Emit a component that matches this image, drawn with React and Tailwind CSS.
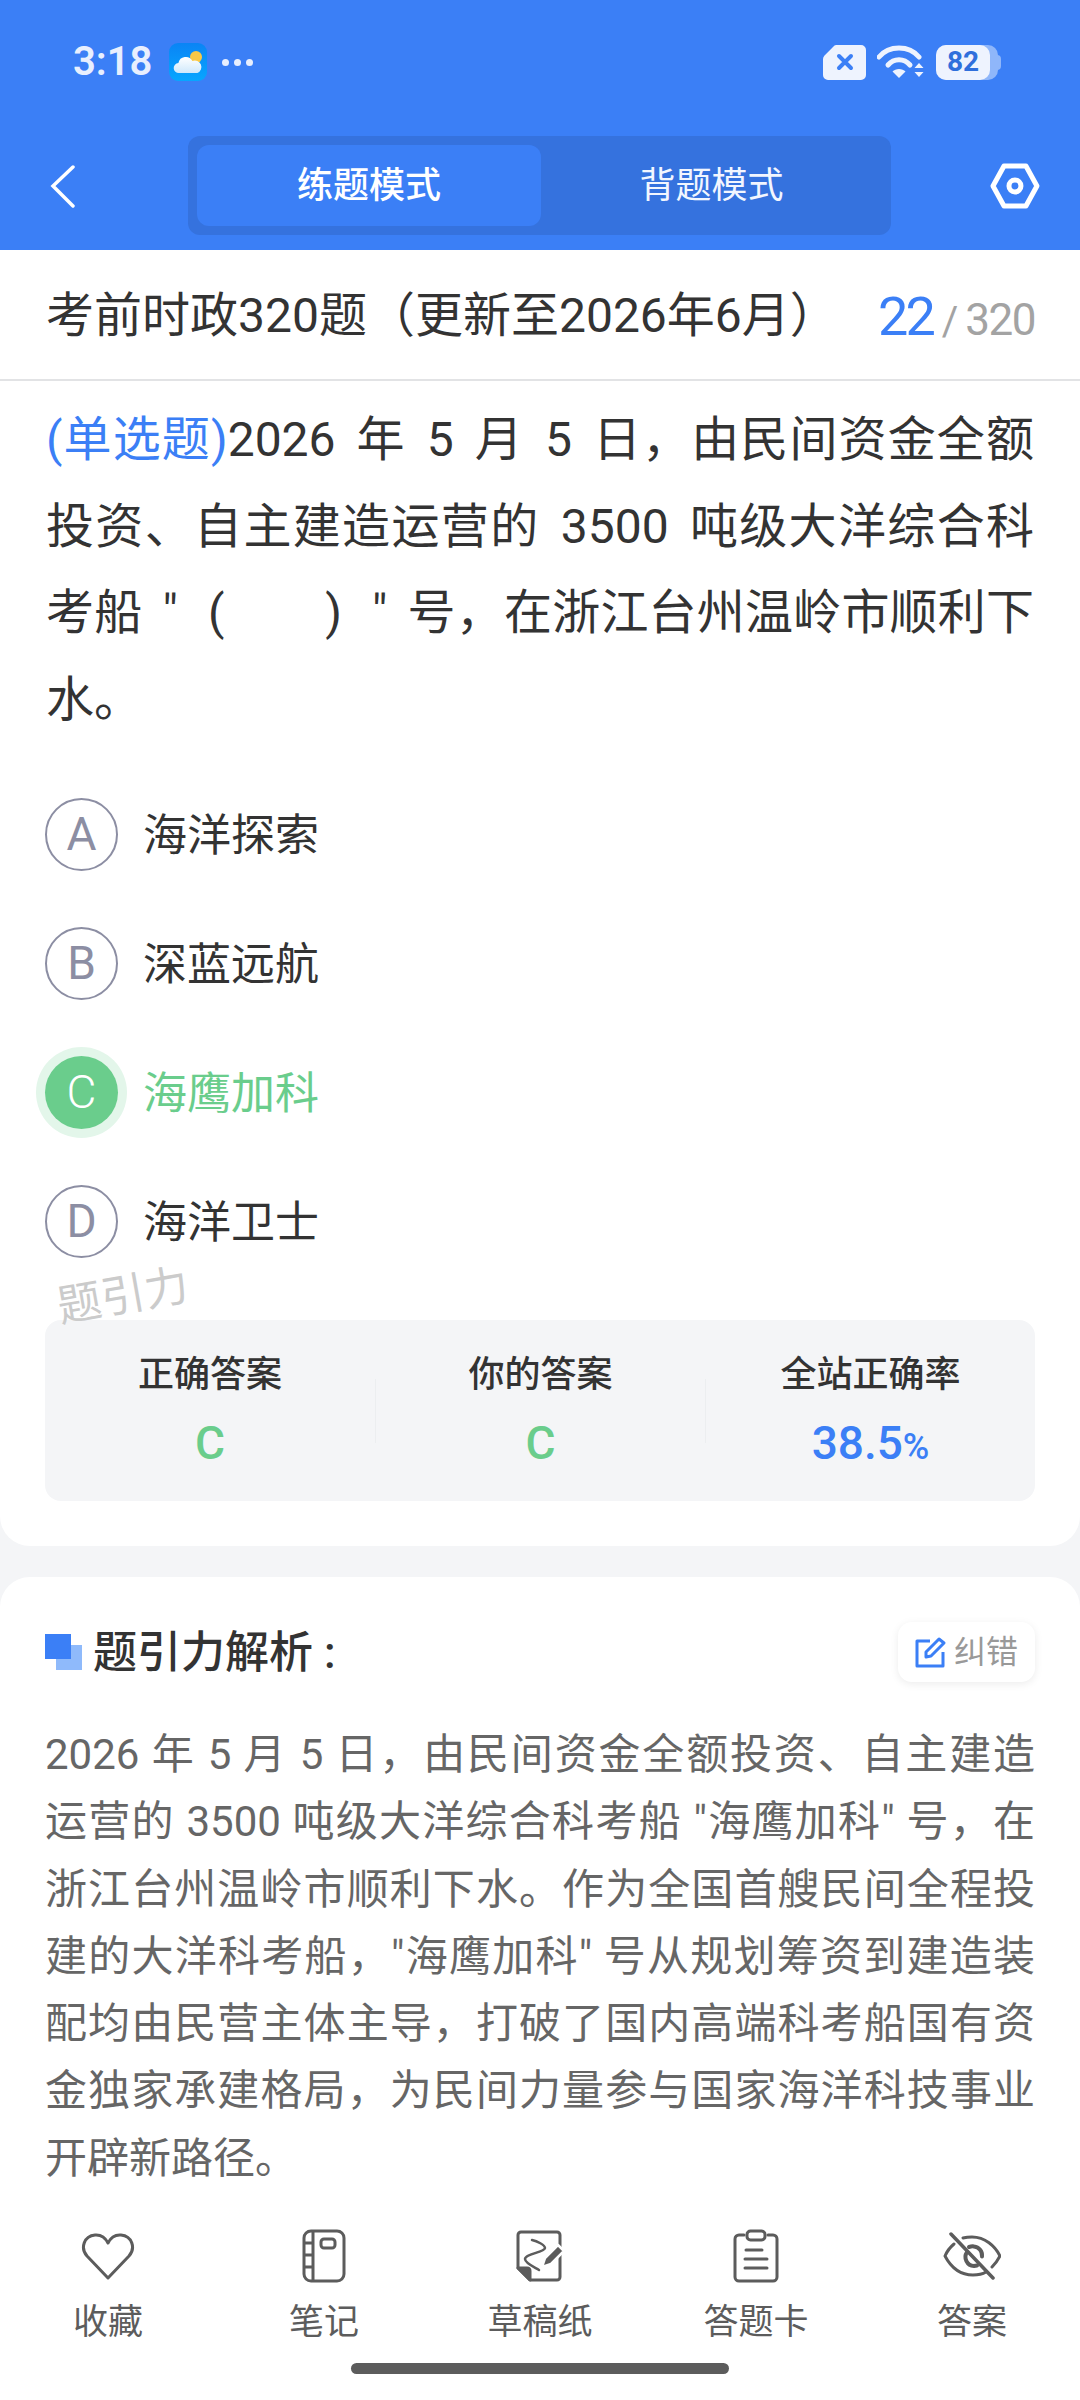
const options = [
  { key: 'A', text: '海洋探索' },
  { key: 'B', text: '深蓝远航' },
  { key: 'C', text: '海鹰加科', correct: true },
  { key: 'D', text: '海洋卫士' },
];

function WeatherIcon() {
  return (
    <svg width="38" height="38" viewBox="0 0 38 38">
      <defs>
        <linearGradient id="sky" x1="0" y1="0" x2="0" y2="1">
          <stop offset="0" stopColor="#0a84f5" />
          <stop offset="1" stopColor="#07a6ff" />
        </linearGradient>
        <linearGradient id="cloud" x1="0" y1="0" x2="0" y2="1">
          <stop offset="0" stopColor="#ffffff" />
          <stop offset="1" stopColor="#cfe8fb" />
        </linearGradient>
      </defs>
      <rect width="38" height="38" rx="9" fill="url(#sky)" />
      <circle cx="27" cy="14" r="6" fill="#f9c846" />
      <path d="M10 30a5 5 0 0 1-.6-10 7.500 7.500 0 0 1 14-2 6 6 0 0 1 5 12z" fill="url(#cloud)" />
    </svg>
  );
}

function SimIcon() {
  return (
    <svg width="43" height="35" viewBox="0 0 43 35">
      <path d="M13 0h25a5 5 0 0 1 5 5v25a5 5 0 0 1-5 5H5a5 5 0 0 1-5-5V14q0-2 1.500-3.500L10 2q1.500-2 3-2z" fill="#eef3fe" />
      <path d="M16 11l12 12M28 11L16 23" stroke="#3b7ff6" strokeWidth="4" strokeLinecap="round" />
    </svg>
  );
}

function WifiIcon() {
  return (
    <svg width="48" height="36" viewBox="0 0 48 36" fill="none">
      <path d="M2 13C12 1 32 1 42 13" stroke="#eef3fe" strokeWidth="5" strokeLinecap="round" />
      <path d="M11 21c6-7 16-7 22 0" stroke="#eef3fe" strokeWidth="5" strokeLinecap="round" />
      <path d="M15.500 27.500c3-3.500 10-3.500 13 0L22 34z" fill="#eef3fe" />
      <path d="M37.500 24l4.500-5 4.500 5zM37.500 28l4.500 5 4.500-5z" fill="#eef3fe" />
    </svg>
  );
}

function BatteryIcon() {
  return (
    <div className="relative flex h-[35px] w-[65px] items-center">
      <div className="absolute left-0 top-0 h-[35px] w-[62px] rounded-[10px] bg-[#8fb6fa]" />
      <div className="absolute right-0 top-[10px] h-[15px] w-[6px] rounded-r-[4px] bg-[#8fb6fa]" />
      <div className="absolute left-0 top-0 flex h-[35px] w-[54px] items-center justify-center rounded-[10px] bg-[#eef3fe] text-[28px] font-bold leading-none text-[#2f6fdc]">
        82
      </div>
    </div>
  );
}

function HeartIcon() {
  return (
    <svg width="54" height="50" viewBox="0 0 54 50" fill="none" stroke="#5c5c5c" strokeWidth="3" strokeLinejoin="round">
      <path d="M27 47L6 25C-1 17 3 5 14 4c6-.5 10 2 13 8 3-6 7-8.500 13-8 11 1 15 13 8 21z" />
    </svg>
  );
}

function NoteIcon() {
  return (
    <svg width="44" height="54" viewBox="0 0 44 54" fill="none" stroke="#5c5c5c" strokeWidth="3">
      <rect x="2" y="2" width="40" height="50" rx="7" />
      <path d="M11 2v50M2 14h9M2 26h9M2 38h9" />
      <rect x="19" y="10" width="14" height="9" rx="3" />
    </svg>
  );
}

function DraftIcon() {
  return (
    <svg width="48" height="52" viewBox="0 0 48 52" fill="none" stroke="#5c5c5c" strokeWidth="3" strokeLinejoin="round">
      <path d="M14 50H41a3 3 0 0 0 3-3V5a3 3 0 0 0-3-3H5a3 3 0 0 0-3 3V38z" />
      <path d="M2 38h9q3 0 3 3v9z" fill="#5c5c5c" />
      <path d="M16 10c5 1 13 5 13 8 0 4-20 6-20 11 0 4 9 8 14 11" strokeWidth="2.500" strokeLinecap="round" />
      <path d="M26 37l3-9 13-13 6 6-13 13z" fill="#5c5c5c" stroke="#fff" strokeWidth="2.500" />
    </svg>
  );
}

function CardIcon() {
  return (
    <svg width="46" height="54" viewBox="0 0 46 54" fill="none" stroke="#5c5c5c" strokeWidth="3" strokeLinecap="round">
      <path d="M11 6H6a4 4 0 0 0-4 4v38a4 4 0 0 0 4 4h34a4 4 0 0 0 4-4V10a4 4 0 0 0-4-4h-5" />
      <rect x="14" y="2" width="18" height="9" rx="3.500" />
      <path d="M13 21h16M12 30h22M12 39h22" />
    </svg>
  );
}

function EyeOffIcon() {
  return (
    <svg width="58" height="48" viewBox="0 0 58 48" fill="none" stroke="#5c5c5c" strokeWidth="3" strokeLinecap="round" strokeLinejoin="round">
      <path d="M11 12Q5 17 2 24q10 19 28 19 8 0 13-3M20 6q4-1 9-1c13 0 23 9 28 19q-3 6-8 11" />
      <path d="M24 20a9 9 0 0 0 7 14l3-.5M26 15q3-1 5-.5a9 9 0 0 1 8 10" strokeWidth="4" />
      <path d="M8 2l42 44" strokeWidth="3.500" />
    </svg>
  );
}

const tools = [
  { label: '收藏', icon: <HeartIcon /> },
  { label: '笔记', icon: <NoteIcon /> },
  { label: '草稿纸', icon: <DraftIcon /> },
  { label: '答题卡', icon: <CardIcon /> },
  { label: '答案', icon: <EyeOffIcon /> },
];

export default function App() {
  return (
    <div className="flex h-[2400px] w-[1080px] flex-col overflow-hidden bg-[#f4f5f7] font-['Roboto','Noto_Sans_CJK_SC',sans-serif]">
      {/* header */}
      <header className="h-[250px] shrink-0 bg-[#3b7ff6] text-white">
        <div className="flex h-[124px] items-center justify-between pl-[73px] pr-[79px]">
          <div className="flex items-center">
            <span className="text-[40px] font-semibold leading-none text-[#e8effe]">3:18</span>
            <span className="ml-[17px] flex"><WeatherIcon /></span>
            <span className="ml-[15px] flex gap-[5px]">
              <i className="h-[7px] w-[7px] rounded-full bg-[#e8effe]" />
              <i className="h-[7px] w-[7px] rounded-full bg-[#e8effe]" />
              <i className="h-[7px] w-[7px] rounded-full bg-[#e8effe]" />
            </span>
          </div>
          <div className="flex items-center gap-[11px]">
            <SimIcon />
            <WifiIcon />
            <BatteryIcon />
          </div>
        </div>
        <div className="flex items-center pl-[49px] pr-[40px] pt-[12px]">
          <svg width="28" height="44" viewBox="0 0 28 44" fill="none" stroke="#fff" strokeWidth="3.500" strokeLinecap="round">
            <path d="M24 3L4 22l20 20" />
          </svg>
          <div className="ml-[111px] flex h-[99px] w-[704px] rounded-[12px] bg-[#3572de] p-[9px]">
            <div className="flex w-[344px] items-center justify-center rounded-[12px] bg-[#3b7ff6] text-[36px] font-medium">练题模式</div>
            <div className="flex flex-1 items-center justify-center text-[36px] text-[#f2f6ff]">背题模式</div>
          </div>
          <svg className="ml-[99px]" width="50" height="46" viewBox="0 0 50 46" fill="none" stroke="#fff" strokeWidth="5" strokeLinejoin="round">
            <path d="M14 3h22l11 20-11 20H14L3 23z" />
            <circle cx="25" cy="23" r="6" />
          </svg>
        </div>
      </header>

      <main className="relative min-h-0 flex-1 overflow-hidden">
        {/* question card */}
        <section className="rounded-b-[30px] bg-white pb-[45px]">
          <div className="flex h-[131px] items-center justify-between border-b-2 border-[#e2e3e5] pl-[46px] pr-[45px] pt-[3px]">
            <h1 className="text-[48px] font-normal text-[#333]">考前时政320题（更新至2026年6月）</h1>
            <div className="flex items-baseline">
              <span className="text-[54px] tracking-[-3px] text-[#3b7ff6]">22</span>
              <span className="ml-[9px] text-[40px] text-[#a3a3a3]">/</span>
              <span className="ml-[7px] text-[44px] tracking-[-1.500px] text-[#a3a3a3]">320</span>
            </div>
          </div>
          <p className="px-[46px] pt-[16px] text-justify text-[48px] leading-[86.500px] text-[#333] [text-justify:inter-word] [word-spacing:8px]">
            <span className="text-[#3b7ff6]">(单选题)</span>2026 年 5 月 5 日，由民间资金全额投资、自主建造运营的 3500 吨级大洋综合科考船 " <span className="inline-flex w-[154px] justify-between px-[10px]"><span>(</span><span>)</span></span> " 号，在浙江台州温岭市顺利下水。
          </p>
          <div className="mt-[27px] px-[45px]">
            {options.map((o) => (
              <div key={o.key} className="flex h-[129px] items-center">
                {o.correct ? (
                  <div className="flex h-[73px] w-[73px] items-center justify-center rounded-full bg-[#6acd8c] text-[46px] font-light text-white shadow-[0_0_0_9px_#e3f6ea]">{o.key}</div>
                ) : (
                  <div className="flex h-[73px] w-[73px] items-center justify-center rounded-full border-2 border-[#8c8ea3] text-[46px] text-[#8c8ea3]">{o.key}</div>
                )}
                <span className={o.correct ? 'ml-[25px] pt-[2px] text-[44px] text-[#6acd8c]' : 'ml-[25px] pt-[2px] text-[44px] text-[#333]'}>{o.text}</span>
              </div>
            ))}
          </div>
          <div className="mx-[45px] mt-[34px] flex h-[181px] rounded-[16px] bg-[#f4f5f7] pt-[33px]">
            <div className="flex w-[330px] flex-col items-center">
              <span className="text-[36px] font-medium leading-[44px] text-[#333]">正确答案</span>
              <span className="mt-[18px] text-[46px] font-medium leading-[56px] text-[#6acd8c]">C</span>
            </div>
            <div className="mt-[26px] h-[64px] w-[1px] bg-[#eceef0]" />
            <div className="flex w-[329px] flex-col items-center">
              <span className="text-[36px] font-medium leading-[44px] text-[#333]">你的答案</span>
              <span className="mt-[18px] text-[46px] font-medium leading-[56px] text-[#6acd8c]">C</span>
            </div>
            <div className="mt-[26px] h-[64px] w-[1px] bg-[#eceef0]" />
            <div className="flex flex-1 flex-col items-center">
              <span className="text-[36px] font-medium leading-[44px] text-[#333]">全站正确率</span>
              <span className="mt-[18px] text-[46px] font-medium leading-[56px] text-[#3b7ff6]">38.5<span className="text-[36px]">%</span></span>
            </div>
          </div>
        </section>

        {/* watermark */}
        <div className="absolute left-[57px] top-[1024px] -rotate-[10deg] text-[44px] leading-none text-[#cbcbcb]">题引力</div>

        {/* analysis card */}
        <section className="mt-[31px] rounded-t-[30px] bg-white px-[45px] pt-[45px]">
          <div className="flex h-[60px] items-center justify-between">
            <div className="flex items-center">
              <div className="relative h-[37px] w-[37px]">
                <div className="absolute left-[11px] top-[11px] h-[25px] w-[26px] bg-[#8fbafb]" />
                <div className="absolute left-0 top-0 h-[25px] w-[26px] bg-[#3b7ff6]" />
              </div>
              <span className="ml-[11px] pt-[2px] text-[44px] font-medium leading-none text-[#333]">题引力解析 :</span>
            </div>
            <div className="flex h-[60px] w-[137px] items-center justify-center gap-[7px] rounded-[14px] bg-white shadow-[0_2px_8px_rgba(0,0,0,0.08)]">
              <svg width="32" height="32" viewBox="0 0 32 32" fill="none" stroke="#3b7ff6" strokeWidth="3" strokeLinejoin="round">
                <path d="M15 5H2v25h26V16" />
                <path d="M11 16L24 3l5 4-13 13-5 1z" />
              </svg>
              <span className="text-[32px] text-[#999]">纠错</span>
            </div>
          </div>
          <p className="mt-[39px] text-justify text-[42px] leading-[67.300px] text-[#666]">
            2026 年 5 月 5 日，由民间资金全额投资、自主建造运营的 3500 吨级大洋综合科考船 "海鹰加科" 号，在浙江台州温岭市顺利下水。作为全国首艘民间全程投建的大洋科考船，"海鹰加科" 号从规划筹资到建造装配均由民营主体主导，打破了国内高端科考船国有资金独家承建格局，为民间力量参与国家海洋科技事业开辟新路径。
          </p>
        </section>
      </main>

      {/* bottom toolbar */}
      <nav className="h-[210px] shrink-0 bg-white">
        <div className="grid grid-cols-5 pt-[39px]">
          {tools.map((t) => (
            <div key={t.label} className="flex flex-col items-center">
              <div className="flex h-[54px] items-center justify-center">{t.icon}</div>
              <span className="mt-[18px] text-[35px] leading-[44px] text-[#5c5c5c]">{t.label}</span>
            </div>
          ))}
        </div>
        <div className="mx-auto mt-[18px] h-[11px] w-[378px] rounded-full bg-[#5c5c5c]" />
      </nav>
    </div>
  );
}
